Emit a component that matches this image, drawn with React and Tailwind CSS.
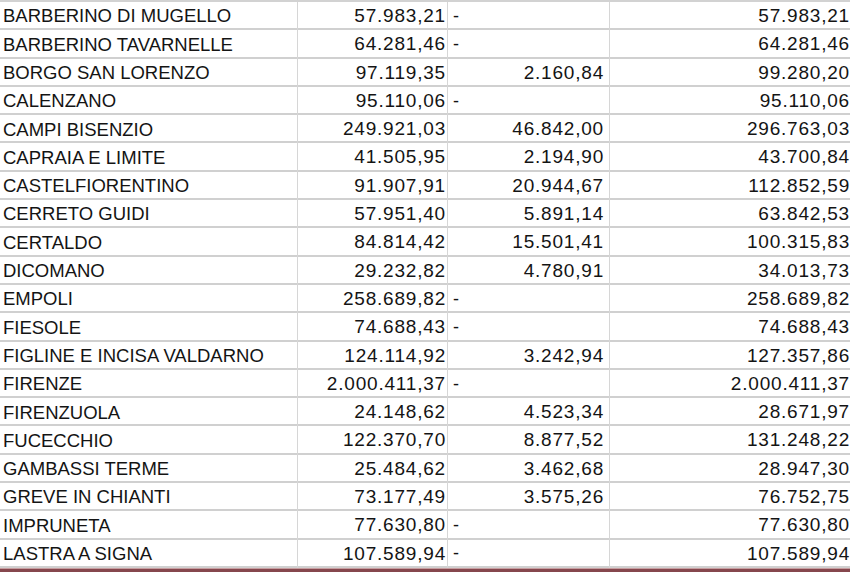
import React from 'react';

const rows = [
  ['BARBERINO DI MUGELLO', '57.983,21', null, '57.983,21'],
  ['BARBERINO TAVARNELLE', '64.281,46', null, '64.281,46'],
  ['BORGO SAN LORENZO', '97.119,35', '2.160,84', '99.280,20'],
  ['CALENZANO', '95.110,06', null, '95.110,06'],
  ['CAMPI BISENZIO', '249.921,03', '46.842,00', '296.763,03'],
  ['CAPRAIA E LIMITE', '41.505,95', '2.194,90', '43.700,84'],
  ['CASTELFIORENTINO', '91.907,91', '20.944,67', '112.852,59'],
  ['CERRETO GUIDI', '57.951,40', '5.891,14', '63.842,53'],
  ['CERTALDO', '84.814,42', '15.501,41', '100.315,83'],
  ['DICOMANO', '29.232,82', '4.780,91', '34.013,73'],
  ['EMPOLI', '258.689,82', null, '258.689,82'],
  ['FIESOLE', '74.688,43', null, '74.688,43'],
  ['FIGLINE E INCISA VALDARNO', '124.114,92', '3.242,94', '127.357,86'],
  ['FIRENZE', '2.000.411,37', null, '2.000.411,37'],
  ['FIRENZUOLA', '24.148,62', '4.523,34', '28.671,97'],
  ['FUCECCHIO', '122.370,70', '8.877,52', '131.248,22'],
  ['GAMBASSI TERME', '25.484,62', '3.462,68', '28.947,30'],
  ['GREVE IN CHIANTI', '73.177,49', '3.575,26', '76.752,75'],
  ['IMPRUNETA', '77.630,80', null, '77.630,80'],
  ['LASTRA A SIGNA', '107.589,94', null, '107.589,94'],
];

// numbers in the sheet are a bit wider than Arial digits, so add some tracking
const num = 'text-[19px] tracking-[0.8px]';

export default function App() {
  return (
    <div className="w-[850px] h-[572px] overflow-hidden bg-white flex flex-col text-[#141414] font-['Liberation_Sans',Arial,sans-serif]">
      <div className="w-[850px] border-t-2 border-[#d2d2d2]">
        {rows.map(([name, a, b, tot]) => (
          <div
            key={name}
            className="grid grid-cols-[298px_150px_162px_240px] h-[28.3px] border-b-2 border-[#d0d0d0]"
          >
            <div className="flex items-center pl-[3px] border-r border-[#d6d6d6] text-[18.5px] whitespace-nowrap">
              {name}
            </div>
            <div className={`flex items-center justify-end pr-[1px] border-r border-[#d6d6d6] ${num}`}>
              {a}
            </div>
            {b ? (
              <div className={`flex items-center justify-end pr-[5px] border-r border-[#d6d6d6] ${num}`}>
                {b}
              </div>
            ) : (
              <div className="flex items-center pl-[5px] border-r border-[#d6d6d6] text-[18px]">-</div>
            )}
            <div className={`flex items-center justify-end pr-0 whitespace-nowrap ${num}`}>{tot}</div>
          </div>
        ))}
      </div>
      <div className="flex-1 border-t border-[#c79ea0] bg-[#86474d]" />
    </div>
  );
}
